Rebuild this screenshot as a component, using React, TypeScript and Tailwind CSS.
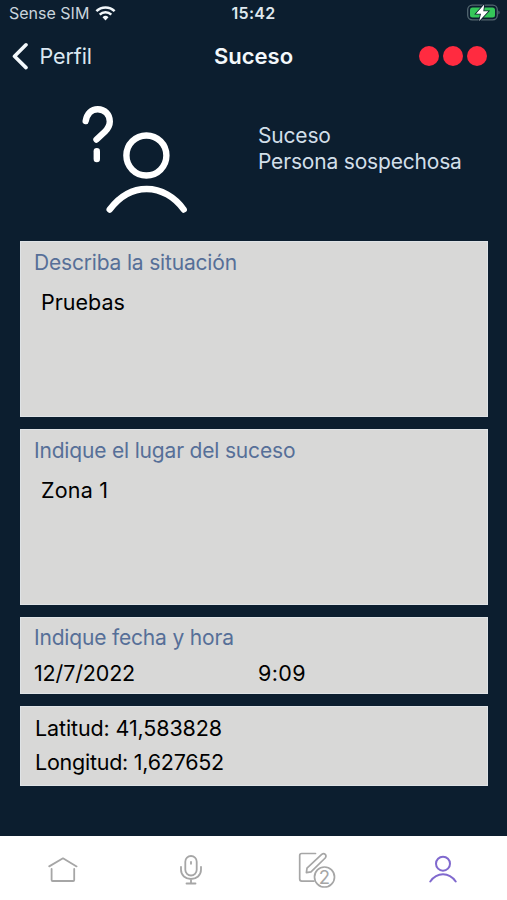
import React from 'react';

interface CardProps {
  className: string;
  children: React.ReactNode;
}

const Card: React.FC<CardProps> = ({ className, children }) => (
  <section className={`bg-[#d8d8d7] outline-1 -outline-offset-1 outline-[#dfe3e6] pl-[14px] leading-[26px] text-black ${className}`}>
    {children}
  </section>
);

const CardTitle: React.FC<{ children: React.ReactNode }> = ({ children }) => (
  <h2 className="pt-px text-[21px] tracking-[-0.18px] text-[#566f98]">{children}</h2>
);

const StatusBar: React.FC = () => (
  <div className="relative flex h-[26px] shrink-0 items-center justify-between pl-[9px] pr-[7px] text-[16px] text-[#c9d4dd]">
    <div className="flex items-center gap-[6px]">
      <span>Sense SIM</span>
      <svg width="21" height="16" viewBox="0 0 21 16" fill="none" stroke="#f2f7fa" strokeWidth="2.5">
        <path d="M1.4 6.2a13 13 0 0 1 18.2 0" />
        <path d="M4.7 9.7a8.3 8.3 0 0 1 11.6 0" />
        <path d="M10.5 15.4l-3-3.1a4.3 4.3 0 0 1 6 0z" fill="#f2f7fa" stroke="none" />
      </svg>
    </div>
    <span className="absolute inset-x-0 text-center font-semibold tracking-[0.3px] text-[#dfe8ee]">15:42</span>
    <svg width="33" height="18" viewBox="0 0 33 18">
      <rect x="0.7" y="1.2" width="29.6" height="14.6" rx="4.5" fill="none" stroke="#52656f" strokeWidth="1.3" />
      <path d="M31.4 6.5v4c1.6-.6 1.6-3.4 0-4z" fill="#52656f" />
      <rect x="3" y="3.5" width="25" height="10" rx="2.5" fill="#35c759" />
      <path d="M17.2 0.5L9 9.7h5l-1.8 7.3L21.3 7.3h-5z" fill="#fff" stroke="#0c1e2f" strokeWidth="1.6" paintOrder="stroke" />
    </svg>
  </div>
);

const Header: React.FC = () => (
  <header className="relative flex h-[60px] shrink-0 items-center justify-between pl-3 pr-5 text-[22px]">
    <div className="flex items-center gap-[11.5px]">
      <svg width="16" height="28" viewBox="0 0 16 28" fill="none" stroke="#f4f9fc" strokeWidth="3.6" strokeLinecap="round" strokeLinejoin="round">
        <path d="M14 2.8L2.5 14.2L14 25.6" />
      </svg>
      <span className="text-[21.5px] tracking-[-0.1px] text-[#dce8f2]">Perfil</span>
    </div>
    <h1 className="pointer-events-none absolute inset-x-0 text-center font-semibold text-[#f3f8fb]">Suceso</h1>
    <div className="flex gap-[4px]">
      <span className="size-5 rounded-full bg-[#ff2b40]" />
      <span className="size-5 rounded-full bg-[#ff2b40]" />
      <span className="size-5 rounded-full bg-[#ff2b40]" />
    </div>
  </header>
);

const SuspectIcon: React.FC = () => (
  <svg width="110" height="110" viewBox="80 104 110 110" fill="none" stroke="#fff" strokeWidth="6.4" strokeLinecap="round">
    {/* Question mark */}
    <path d="M85.7 121C87 113.5 91.5 109.2 97.8 109.2c7 0 12 5.3 12 12.3 0 4.5-2 7.3-5 10.3l-8.3 7.7" />
    <path d="M96.8 151.2v7.8" />
    {/* Person */}
    <circle cx="146.4" cy="155.5" r="20" />
    <path d="M109.7 209.5c9.5-12.5 22.5-20.5 37-20.5s28 8 37 20.500" />
  </svg>
);

const TabBar: React.FC = () => (
  <nav className="flex h-16 shrink-0 items-center bg-white pt-[3px] text-[#a6a6a6]">
    <div className="flex w-[126px] justify-center">
      <svg width="30" height="26" viewBox="0 0 30 26" fill="none" stroke="currentColor" strokeWidth="1.8" strokeLinecap="round" strokeLinejoin="round">
        <path d="M1.2 9.4L15 1.3l13.6 8.1" />
        <path d="M3.6 12v11q0 1 1 1h20.6q1 0 1-1V12" />
      </svg>
    </div>
    <div className="flex w-[130px] justify-center">
      <svg width="22" height="30" viewBox="0 0 22 30" fill="none" stroke="currentColor" strokeWidth="1.8" strokeLinecap="round">
        <rect x="5.3" y="1" width="11.4" height="19.5" rx="5.7" />
        <path d="M11 6.8v2M1 11.8v3c0 5.5 4.5 9.2 10 9.2s10-3.700 10-9.2v-3M11 24v4.400M6.5 28.5h9" />
      </svg>
    </div>
    <div className="flex w-[124px] justify-center">
      <svg width="38" height="36" viewBox="0 0 38 36" fill="none" stroke="currentColor" strokeWidth="1.7" strokeLinecap="round" strokeLinejoin="round">
        <path d="M17.5 1.5H3.7q-2 0-2 2v23.6q0 2 2 2H16" />
        <path d="M8.4 20.7l.6-4.6L23.7 2.4q2-1.5 3.5 0t0 3.600L13 19.9z" />
        <circle cx="26.5" cy="25" r="10" fill="#fff" />
        <text x="26.5" y="31.5" textAnchor="middle" fontSize="18.5" fontFamily="Inter, sans-serif" fill="currentColor" stroke="none">2</text>
      </svg>
    </div>
    <div className="flex w-[128px] justify-center text-[#8069ce]">
      <svg width="28" height="29" viewBox="0 0 28 29" fill="none" stroke="currentColor" strokeWidth="2" strokeLinecap="round">
        <circle cx="14" cy="8.7" r="7" />
        <path d="M1.3 26.5C4.5 22 9 19.3 14 19.3s9.5 2.7 12.7 7.2" />
      </svg>
    </div>
  </nav>
);

export default function App() {
  return (
    <div className="flex h-[900px] w-full flex-col overflow-hidden bg-[#0c1e2f] font-['Inter',sans-serif] text-[21.5px]">
      <StatusBar />
      <Header />

      <main className="flex flex-1 flex-col px-5">
        <div className="flex h-[155px] shrink-0 pl-[60px] pt-[18px]">
          <SuspectIcon />
          <div className="ml-[68px] mt-[19px] text-[21px] leading-[26px] tracking-[-0.18px] whitespace-nowrap text-[#d2dfe9]">
            <p>Suceso</p>
            <p>Persona sospechosa</p>
          </div>
        </div>

        <div className="mr-[-1px] flex flex-col gap-3">
          <Card className="h-44 pt-2">
            <CardTitle>Describa la situación</CardTitle>
            <p className="mt-[13px] pl-[7px]">Pruebas</p>
          </Card>
          <Card className="h-44 pt-2">
            <CardTitle>Indique el lugar del suceso</CardTitle>
            <p className="mt-[13px] pl-[7px] tracking-[0.2px]">Zona 1</p>
          </Card>
          <Card className="h-[77px] pt-[7px]">
            <CardTitle>Indique fecha y hora</CardTitle>
            <div className="mt-[9px] flex">
              <span className="w-[224px] tracking-[-0.15px]">12/7/2022</span>
              <span className="tracking-[0.4px]">9:09</span>
            </div>
          </Card>
          <Card className="h-20 pt-[9px]">
            <p className="pl-px tracking-[-0.12px]">Latitud: 41,583828</p>
            <p className="mt-2 pl-px tracking-[-0.25px]">Longitud: 1,627652</p>
          </Card>
        </div>
      </main>

      <TabBar />
    </div>
  );
}
